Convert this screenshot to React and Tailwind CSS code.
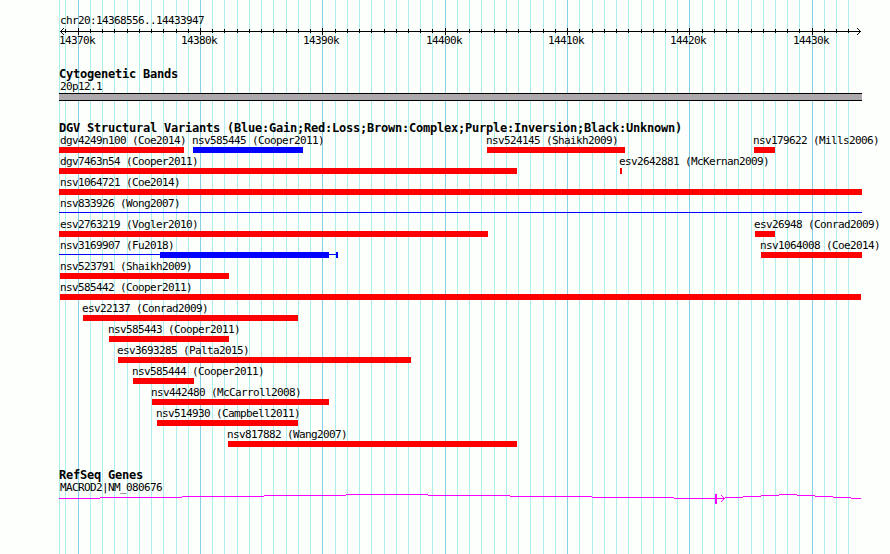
import React from 'react';

// x positions of the kilobase grid lines
const majorLines = [78, 200, 322, 445, 567, 689, 812];
const minorLines = [
  65, 90, 102, 114, 127, 139, 151, 163, 176, 188,
  212, 224, 237, 249, 261, 273, 286, 298, 310,
  335, 347, 359, 371, 384, 396, 408, 420, 432,
  457, 469, 481, 494, 506, 518, 530, 543, 555,
  579, 592, 604, 616, 628, 641, 653, 665, 677,
  702, 714, 726, 738, 751, 763, 775, 787, 799,
  824, 836, 848,
];

const axisLabels = [
  { x: 59, text: '14370k' },
  { x: 181, text: '14380k' },
  { x: 303, text: '14390k' },
  { x: 426, text: '14400k' },
  { x: 548, text: '14410k' },
  { x: 670, text: '14420k' },
  { x: 793, text: '14430k' },
];

const variantRows = [
  [
    { name: 'dgv4249n100 (Coe2014)', start: 59, end: 184 },
    { name: 'nsv585445 (Cooper2011)', start: 193, end: 303, type: 'gain' },
    { name: 'nsv524145 (Shaikh2009)', start: 487, end: 625 },
    { name: 'nsv179622 (Mills2006)', start: 754, end: 775 },
  ],
  [
    { name: 'dgv7463n54 (Cooper2011)', start: 59, end: 517 },
    { name: 'esv2642881 (McKernan2009)', start: 620, end: 622 },
  ],
  [{ name: 'nsv1064721 (Coe2014)', start: 59, end: 862 }],
  [{ name: 'nsv833926 (Wong2007)', start: 59, end: 862, type: 'line' }],
  [
    { name: 'esv2763219 (Vogler2010)', start: 59, end: 488 },
    { name: 'esv26948 (Conrad2009)', start: 755, end: 775 },
  ],
  [
    { name: 'nsv3169907 (Fu2018)', start: 59, end: 338, type: 'nested' },
    { name: 'nsv1064008 (Coe2014)', start: 761, end: 862 },
  ],
  [{ name: 'nsv523791 (Shaikh2009)', start: 60, end: 229 }],
  [{ name: 'nsv585442 (Cooper2011)', start: 60, end: 861 }],
  [{ name: 'esv22137 (Conrad2009)', start: 83, end: 298 }],
  [{ name: 'nsv585443 (Cooper2011)', start: 109, end: 229 }],
  [{ name: 'esv3693285 (Palta2015)', start: 118, end: 411 }],
  [{ name: 'nsv585444 (Cooper2011)', start: 133, end: 194 }],
  [{ name: 'nsv442480 (McCarroll2008)', start: 152, end: 329 }],
  [{ name: 'nsv514930 (Campbell2011)', start: 157, end: 298 }],
  [{ name: 'nsv817882 (Wang2007)', start: 228, end: 517 }],
];

// [start, end, y] steps of the intron line
const geneSteps = [
  [59, 100, 4], [100, 182, 3], [182, 264, 2], [264, 346, 1], [346, 428, 0],
  [428, 510, 1], [510, 592, 2], [592, 674, 3], [674, 725, 4],
  [725, 743, 3], [743, 761, 2], [761, 779, 1], [779, 797, 0],
  [797, 815, 1], [815, 833, 2], [833, 851, 3], [851, 861, 4],
];

const Label = ({ children }) => (
  <div className="h-3 whitespace-pre text-[11px] leading-3 tracking-[-0.622px]">{children}</div>
);

const Title = ({ children }) => (
  <h2 className="h-3 whitespace-pre pl-[59px] text-[12px] font-bold leading-3 tracking-[-0.224px]">
    {children}
  </h2>
);

const GridLines = () => (
  <svg className="absolute inset-0" width="890" height="554" shapeRendering="crispEdges">
    <rect x="59" y="0" width="1" height="554" fill="#afeeee" />
    {minorLines.map((x) => (
      <rect key={x} x={x} y="0" width="1" height="554" fill="#afeeee" />
    ))}
    {majorLines.map((x) => (
      <rect key={x} x={x} y="0" width="1" height="554" fill="#87ceeb" />
    ))}
  </svg>
);

const Axis = () => (
  <svg className="block" width="890" height="8" shapeRendering="crispEdges">
    <rect x="60" y="3" width="801" height="1" />
    {minorLines.map((x) => (
      <rect key={x} x={x} y="1" width="1" height="4" />
    ))}
    {majorLines.map((x) => (
      <rect key={x} x={x} y="0" width="1" height="7" />
    ))}
    {[1, 2, 3].map((d) => (
      <g key={d}>
        <rect x={60 + d} y={3 - d} width="1" height="1" />
        <rect x={60 + d} y={3 + d} width="1" height="1" />
        <rect x={860 - d} y={3 - d} width="1" height="1" />
        <rect x={860 - d} y={3 + d} width="1" height="1" />
      </g>
    ))}
  </svg>
);

const Glyph = ({ type, width }) => {
  if (type === 'line') {
    return <div className="mt-[2px] h-px bg-[#0000ff]" style={{ width }} />;
  }
  if (type === 'nested') {
    return (
      <div className="flex h-1.5 items-start">
        <div className="mt-[2px] h-px w-[101px] bg-[#0000ff]" />
        <div className="h-1.5 w-[169px] bg-[#0000ff]" />
        <div className="mt-[2px] h-px w-[7px] bg-[#0000ff]" />
        <div className="h-1.5 w-[2px] bg-[#0000ff]" />
      </div>
    );
  }
  return (
    <div className={`h-1.5 ${type === 'gain' ? 'bg-[#0000ff]' : 'bg-[#ff0000]'}`} style={{ width }} />
  );
};

const VariantRow = ({ items }) => (
  <div className="grid h-[21px] grid-cols-1">
    {items.map((item) => (
      <div key={item.name} className="[grid-area:1/1]" style={{ marginLeft: item.start }}>
        {/* labels never start left of the panel edge */}
        <div style={{ marginLeft: Math.max(60 - item.start, -1) }}>
          <Label>{item.name}</Label>
        </div>
        <Glyph type={item.type} width={item.end - item.start} />
      </div>
    ))}
  </div>
);

const Gene = () => (
  <svg className="block" width="890" height="10" fill="#ff00ff" shapeRendering="crispEdges">
    {geneSteps.map(([start, end, y]) => (
      <rect key={start} x={start} y={y} width={end - start} height="1" />
    ))}
    <rect x="715" y="0" width="2" height="10" />
    {[1, 2, 3].map((d) => (
      <g key={d}>
        <rect x={724 - d} y={4 - d} width="1" height="1" />
        <rect x={724 - d} y={4 + d} width="1" height="1" />
      </g>
    ))}
  </svg>
);

const App = () => {
  return (
    <div className="relative h-[554px] w-[890px] overflow-hidden bg-[#fdfffc] font-['DejaVu_Sans_Mono',monospace] text-black">
      <GridLines />
      <div className="relative pt-[15px]">
        {/* Scale */}
        <div className="pl-[60px]">
          <Label>chr20:14368556..14433947</Label>
        </div>
        <div className="pt-px">
          <Axis />
        </div>
        <div className="-mt-px grid h-3 grid-cols-1">
          {axisLabels.map((label) => (
            <div key={label.text} className="[grid-area:1/1]" style={{ marginLeft: label.x }}>
              <Label>{label.text}</Label>
            </div>
          ))}
        </div>

        {/* Cytogenetic bands */}
        <section className="pt-[21px]">
          <Title>Cytogenetic Bands</Title>
          <div className="pl-[60px] pt-px">
            <Label>20p12.1</Label>
          </div>
          <div className="ml-[59px] h-2 w-[803px] border-y border-black bg-[#aca8ab]" />
        </section>

        {/* Structural variants */}
        <section className="pt-[21px]">
          <Title>DGV Structural Variants (Blue:Gain;Red:Loss;Brown:Complex;Purple:Inversion;Black:Unknown)</Title>
          <div className="pt-px">
            {variantRows.map((items) => (
              <VariantRow key={items[0].name} items={items} />
            ))}
          </div>
        </section>

        {/* Genes */}
        <section className="pt-[19px]">
          <Title>RefSeq Genes</Title>
          <div className="pl-[60px] pt-px">
            <Label>MACROD2|NM_080676</Label>
          </div>
          <Gene />
        </section>
      </div>
    </div>
  );
};

export default App;
